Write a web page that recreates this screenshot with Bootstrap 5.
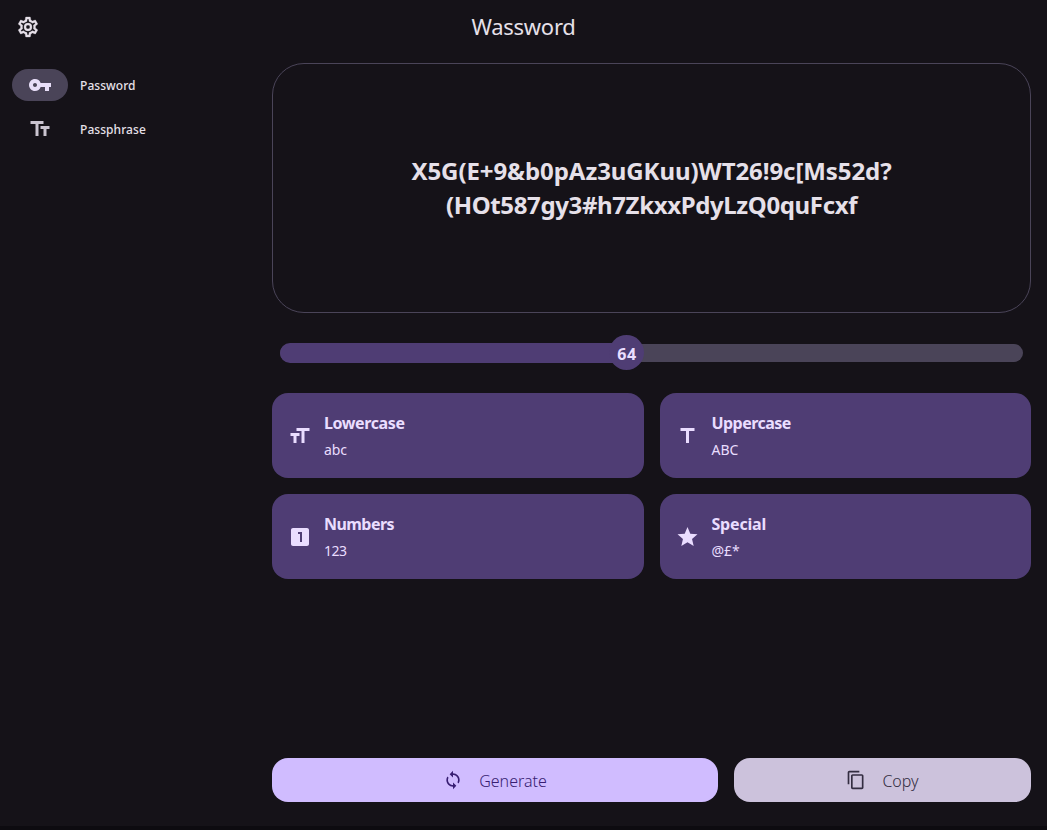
<!DOCTYPE html>
<html lang="en" data-bs-theme="dark">
<head>
<meta charset="utf-8">
<title>Wassword</title>
<meta name="viewport" content="width=device-width, initial-scale=1">
<link href="https://cdn.jsdelivr.net/npm/bootstrap@5.3.0/dist/css/bootstrap.min.css" rel="stylesheet">
<style>
body{background:#151218;color:#e6e0e9;font-family:"Noto Sans",sans-serif;border-bottom:4px solid #0d0b10}
svg{display:block;fill:currentColor;flex:none}
.topbar{height:55px}
.topbar h1{font-size:22px;line-height:28px;margin:0 0 3px;font-weight:400;color:#e6e0e9;letter-spacing:-.25px}
.settings{left:16px;top:15px;stroke:currentColor;stroke-width:.3}
.rail{width:272px;padding:14px 12px}
.rail .nav-link{height:32px;margin-bottom:12px;padding:0;gap:12px;font-size:12px;font-weight:500;color:#e6e0e9}
.rail-label{padding-top:2px;letter-spacing:.06px}
.pill{width:56px;height:32px;color:#cac4d0}
.active .pill{background:#4a4458;color:#e8def8}
.main-pane{padding:8px 16px 24px 0}
.secret{height:250px;border:1px solid #4a4458;border-radius:32px;font-size:24px;line-height:34px;font-weight:700}
.line-a{letter-spacing:-.08px}
.line-b{letter-spacing:-.37px}
.slider{height:36px;margin:22px 8px 0}
.track{height:18px;background:#4a4458;border-radius:9px}
.fill{height:20px;background:#4f3d74;border-radius:10px 0 0 10px;width:346px}
.thumb{width:35px;height:35px;background:#4f3d74;color:#eaddff;left:329px;top:0;font-size:16px;font-weight:700;letter-spacing:.5px;padding:2px 0 0 1px}
.options{display:grid;grid-template-columns:1fr 1fr;gap:16px;margin-top:22px}
.option{height:85px;background:#4f3d74;color:#eaddff;border-radius:16px;padding:0 16px;gap:12px}
.option b{display:block;font-size:16px;line-height:24px;letter-spacing:-.4px}
.option b.snug{letter-spacing:-.55px}
.option b.loose{letter-spacing:-.2px}
.option small{display:block;font-size:14px;line-height:20px;margin-top:5px;letter-spacing:-.05px}
.option small.digits{letter-spacing:-.5px}
.action{height:44px;border-radius:16px;gap:16px;font-size:16px;border:0;padding:0;font-weight:300}
.action span{padding-top:2px}
.gen{width:446px;background:#d0bcff;color:#381e72}
.copy{background:#ccc2dc;color:#332d41}
</style>
</head>
<body class="vh-100 d-flex flex-column overflow-hidden">
<header class="topbar position-relative d-flex align-items-center justify-content-center">
<svg class="settings position-absolute" width="24" height="24" viewBox="0 0 24 24"><path d="M19.43 12.98c.04-.32.07-.64.07-.98s-.03-.66-.07-.98l2.11-1.65c.19-.15.24-.42.12-.64l-2-3.46a.5.5 0 0 0-.61-.22l-2.49 1c-.52-.4-1.08-.73-1.69-.98l-.38-2.65A.488.488 0 0 0 14 2h-4c-.25 0-.46.18-.49.42l-.38 2.65c-.61.25-1.17.59-1.69.98l-2.49-1a.5.5 0 0 0-.61.22l-2 3.46c-.13.22-.07.49.12.64l2.11 1.65c-.04.32-.07.65-.07.98s.03.66.07.98l-2.11 1.65c-.19.15-.24.42-.12.64l2 3.46c.12.22.39.3.61.22l2.49-1c.52.4 1.08.73 1.69.98l.38 2.65c.03.24.24.42.49.42h4c.25 0 .46-.18.49-.42l.38-2.65c.61-.25 1.17-.59 1.69-.98l2.49 1c.23.09.49 0 .61-.22l2-3.46c.12-.22.07-.49-.12-.64zm-1.98-1.71c.04.31.05.52.05.73s-.02.43-.05.73l-.14 1.13.89.7 1.08.84-.7 1.21-1.27-.51-1.04-.42-.9.68c-.43.32-.84.56-1.25.73l-1.06.43-.16 1.13-.2 1.35h-1.4l-.19-1.35-.16-1.13-1.06-.43c-.43-.18-.83-.41-1.23-.71l-.91-.7-1.06.43-1.27.51-.7-1.21 1.08-.84.89-.7-.14-1.13c-.03-.31-.05-.54-.05-.74s.02-.43.05-.73l.14-1.13-.89-.7-1.08-.84.7-1.21 1.27.51 1.04.42.9-.68c.43-.32.84-.56 1.25-.73l1.06-.43.16-1.13.2-1.35h1.39l.19 1.35.16 1.13 1.06.43c.43.18.83.41 1.23.71l.91.7 1.06-.43 1.27-.51.7 1.21-1.07.85-.89.7zM12 8a4 4 0 1 0 0 8 4 4 0 0 0 0-8m0 6a2 2 0 1 1 0-4 2 2 0 0 1 0 4"/></svg>
<h1>Wassword</h1>
</header>
<div class="d-flex flex-grow-1">
<nav class="rail nav flex-column flex-nowrap">
<a class="nav-link active d-flex align-items-center"><span class="pill rounded-pill d-flex align-items-center justify-content-center"><svg width="24" height="24" viewBox="0 0 24 24"><path d="M12.650 10A5.990 5.990 0 0 0 7 6c-3.310 0-6 2.690-6 6s2.690 6 6 6a5.990 5.990 0 0 0 5.650-4H17v4h4v-4h2v-4zM7 14c-1.100 0-2-.9-2-2s.9-2 2-2 2 .9 2 2-.9 2-2 2"/></svg></span><span class="rail-label">Password</span></a>
<a class="nav-link d-flex align-items-center"><span class="pill d-flex align-items-center justify-content-center"><svg width="24" height="24" viewBox="0 0 24 24"><path d="M2.500 4v3h5v12h3V7h5V4zm19 5h-9v3h3v7h3v-7h3z"/></svg></span><span class="rail-label">Passphrase</span></a>
</nav>
<main class="main-pane d-flex flex-column flex-grow-1">
<section class="secret d-flex align-items-center justify-content-center text-center"><div><span class="line-a">X5G(E+9&amp;b0pAz3uGKuu)WT26!9c[Ms52d?</span><br><span class="line-b">(HOt587gy3#h7ZkxxPdyLzQ0quFcxf</span></div></section>
<div class="slider position-relative d-flex align-items-center"><div class="track d-flex align-items-center w-100"><div class="fill"></div></div><div class="thumb position-absolute rounded-circle d-flex align-items-center justify-content-center">64</div></div>
<section class="options">
<div class="option d-flex align-items-center"><svg width="24" height="24" viewBox="0 0 24 24"><path transform="matrix(-1 0 0 1 24 0)" d="M2.500 4v3h5v12h3V7h5V4zm19 5h-9v3h3v7h3v-7h3z"/></svg><div><b>Lowercase</b><small>abc</small></div></div>
<div class="option d-flex align-items-center"><svg width="24" height="24" viewBox="0 0 24 24"><path d="M4.500 4v3h5.500v12h3V7h5.500V4z"/></svg><div><b class="snug">Uppercase</b><small>ABC</small></div></div>
<div class="option d-flex align-items-center"><svg width="24" height="24" viewBox="0 0 24 24"><path d="M19 3H5c-1.100 0-2 .9-2 2v14c0 1.100.9 2 2 2h14c1.100 0 2-.9 2-2V5c0-1.100-.9-2-2-2m-5 14h-2V9h-2V7h4z"/></svg><div><b class="snug">Numbers</b><small class="digits">123</small></div></div>
<div class="option d-flex align-items-center"><svg width="24" height="24" viewBox="0 0 24 24"><path transform="translate(-.5 0)" d="M12 17.270 18.180 21l-1.640-7.030L22 9.240l-7.190-.61L12 2 9.190 8.630 2 9.240l5.460 4.730L5.820 21z"/></svg><div><b class="loose">Special</b><small>@£*</small></div></div>
</section>
<footer class="d-flex gap-3 mt-auto">
<button class="action gen d-flex align-items-center justify-content-center"><svg width="20" height="20" viewBox="0 0 24 24"><path d="M12 4V1L8 5l4 4V6c3.310 0 6 2.690 6 6 0 1.010-.25 1.970-.7 2.800l1.460 1.460A7.930 7.930 0 0 0 20 12c0-4.420-3.580-8-8-8m0 14c-3.310 0-6-2.690-6-6 0-1.010.25-1.970.7-2.800L5.240 7.740A7.930 7.930 0 0 0 4 12c0 4.420 3.580 8 8 8v3l4-4-4-4z"/></svg><span>Generate</span></button>
<button class="action copy d-flex align-items-center justify-content-center flex-grow-1"><svg width="20" height="20" viewBox="0 0 24 24"><path d="M16 1H4c-1.100 0-2 .9-2 2v14h2V3h12zm3 4H8c-1.100 0-2 .9-2 2v14c0 1.100.9 2 2 2h11c1.100 0 2-.9 2-2V7c0-1.100-.9-2-2-2m0 16H8V7h11z"/></svg><span>Copy</span></button>
</footer>
</main>
</div>
<script src="https://cdn.jsdelivr.net/npm/bootstrap@5.3.0/dist/js/bootstrap.bundle.min.js"></script>
</body>
</html>
